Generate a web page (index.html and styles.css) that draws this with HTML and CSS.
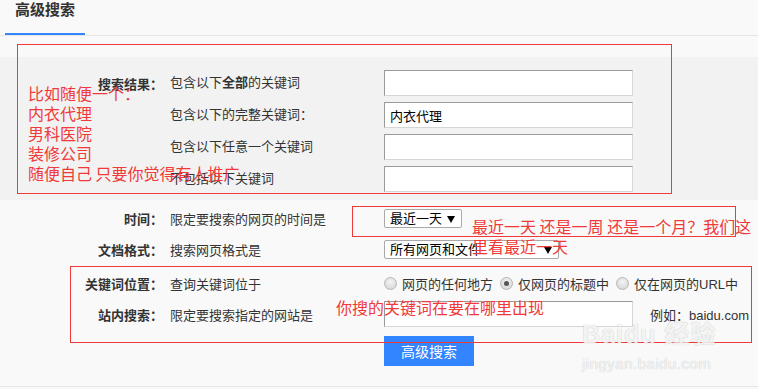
FILE: index.html
```html
<!DOCTYPE html>
<html lang="zh-CN">
<head>
<meta charset="utf-8">
<link rel="stylesheet" href="styles.css">
</head>
<body>
<div class="page">
  <div class="tabs">
    <div class="tab">高级搜索</div>
  </div>

  <div class="group">
    <div class="row">
      <div class="label">搜索结果：</div>
      <div class="desc">包含以下<b>全部</b>的关键词</div>
      <input class="field" type="text">
    </div>
    <div class="row">
      <div class="label"></div>
      <div class="desc">包含以下的完整关键词：</div>
      <input class="field" type="text" value="内衣代理">
    </div>
    <div class="row">
      <div class="label"></div>
      <div class="desc">包含以下任意一个关键词</div>
      <input class="field" type="text">
    </div>
    <div class="row">
      <div class="label"></div>
      <div class="desc">不包括以下关键词</div>
      <input class="field" type="text">
    </div>
  </div>

  <div class="plain">
    <div class="row row-time">
      <div class="label">时间：</div>
      <div class="desc">限定要搜索的网页的时间是</div>
      <span class="sel sel-time">最近一天</span>
    </div>
    <div class="row row-format">
      <div class="label">文档格式：</div>
      <div class="desc">搜索网页格式是</div>
      <span class="sel sel-format">所有网页和文件</span>
    </div>
    <div class="row row-pos">
      <div class="label">关键词位置：</div>
      <div class="desc">查询关键词位于</div>
      <div class="radios">
        <span class="radio"><i class="dot"></i>网页的任何地方</span>
        <span class="radio"><i class="dot on"></i>仅网页的标题中</span>
        <span class="radio"><i class="dot"></i>仅在网页的URL中</span>
      </div>
    </div>
    <div class="row row-site">
      <div class="label">站内搜索：</div>
      <div class="desc">限定要搜索指定的网站是</div>
      <input class="field" type="text">
      <span class="example">例如：baidu.com</span>
    </div>
    <div class="row row-btn">
      <div class="label"></div>
      <div class="desc"></div>
      <button class="btn">高级搜索</button>
    </div>
  </div>
  <div class="footline"></div>

  <div class="box box1"></div>
  <div class="box box2"></div>
  <div class="box box3"></div>

  <div class="note note1">比如随便一个：<br>内衣代理<br>男科医院<br>装修公司<br>随便自己 只要你觉得有人推广</div>
  <div class="note note2">最近一天 还是一周 还是一个月？我们这<br>里看最近一天</div>
  <div class="note note3">你搜的关键词在要在哪里出现</div>

  <div class="wm">
    <div class="wm-logo">Baidu 经验</div>
    <div class="wm-url">jingyan.baidu.com</div>
  </div>
</div>
</body>
</html>
```

FILE: styles.css
```css
* { box-sizing: border-box; }
html, body { margin: 0; padding: 0; }
body {
  background: #f9f9f9;
  font-family: "Liberation Sans", "Noto Sans CJK SC", sans-serif;
  font-size: 13px;
  color: #333;
  width: 758px;
  height: 389px;
  overflow: hidden;
}
.page { position: relative; width: 758px; height: 389px; }

.tabs {
  height: 36px;
  border-bottom: 1px solid #e6e6e6;
  padding-left: 5px;
}
.tab {
  width: 80px;
  height: 35px;
  border-bottom: 2px solid #3385ff;
  padding-left: 10px;
  font-size: 15px;
  font-weight: bold;
  line-height: 20px;
  color: #333;
}

.group {
  margin-top: 21px;
  background: #f2f2f2;
  padding: 13px 0 8px;
  height: 143px;
}
.row {
  display: flex;
  align-items: center;
  height: 26px;
  margin-bottom: 6px;
}
.group .desc { margin-top: -3px; }
.label {
  width: 163px;
  text-align: right;
  font-weight: bold;
  flex: none;
}
.desc {
  width: 221px;
  padding-left: 7px;
  flex: none;
}
.desc b { font-weight: bold; }
.field {
  width: 249px;
  height: 26px;
  background: #fff;
  border: 1px solid #d6d6d6;
  border-top-color: #9a9a9a;
  border-left-color: #9a9a9a;
  font-family: "Liberation Sans", "Noto Sans CJK SC", sans-serif;
  font-size: 13px;
  color: #000;
  padding: 0 5px;
  margin: 0;
  outline: none;
}

.plain { padding-top: 8px; }
.plain .row { margin-bottom: 0; }
.row-time { height: 20px; margin-top: 0; }
.row-format { height: 20px; margin-top: 11px; }
.row-pos { height: 20px; margin-top: 14px; }
.row-site { height: 26px; margin-top: 8px; }
.row-btn { height: 30px; margin-top: 9px; }

.sel {
  position: relative;
  display: inline-block;
  height: 19px;
  line-height: 17px;
  background: #fff;
  border: 1px solid #a9a9a9;
  border-radius: 2px;
  padding-left: 5px;
  color: #000;
  font-size: 13px;
}
.sel::after {
  content: "";
  position: absolute;
  right: 6px;
  top: 6px;
  width: 0;
  height: 0;
  border-left: 4px solid transparent;
  border-right: 4px solid transparent;
  border-top: 7px solid #000;
}
.sel-time { width: 78px; }
.sel-format { width: 175px; }

.radios { display: flex; align-items: center; }
.radio {
  display: inline-flex;
  align-items: center;
  margin-right: 7px;
  white-space: nowrap;
}
.dot {
  display: inline-block;
  width: 13px;
  height: 13px;
  border-radius: 50%;
  border: 1px solid #b5b5b5;
  background: radial-gradient(circle at 50% 35%, #f4f4f4 0%, #dcdcdc 70%, #cfcfcf 100%);
  margin: 0 5px 0 0;
  position: relative;
}
.dot.on::after {
  content: "";
  position: absolute;
  left: 3px; top: 3px;
  width: 5px; height: 5px;
  border-radius: 50%;
  background: #555;
}
.example { margin-left: 17px; white-space: nowrap; }

.btn {
  width: 90px;
  height: 30px;
  border: 0;
  background: #3385ff;
  color: #fff;
  font-family: "Noto Sans CJK SC", sans-serif;
  font-size: 14px;
  padding: 0;
  margin: 0;
}

.footline {
  position: absolute;
  left: 0; right: 0; top: 386px;
  border-top: 1px solid #e6e6e6;
}

.box { position: absolute; border: 1px solid #f03a3a; }
.box1 { left: 17px; top: 44px; width: 655px; height: 150px; }
.box2 { left: 352px; top: 206px; width: 384px; height: 31px; }
.box3 { left: 70px; top: 266px; width: 682px; height: 77px; }

.note {
  position: absolute;
  color: #f03a3a;
  font-family: "Noto Sans CJK SC", sans-serif;
  font-size: 16px;
  line-height: 20px;
  white-space: nowrap;
}
.note1 { left: 28px; top: 83px; }
.note2 { left: 472px; top: 216px; }
.note3 { left: 336px; top: 297px; }

.wm {
  position: absolute;
  left: 582px;
  top: 320px;
  color: rgba(255, 255, 255, 0.85);
  text-shadow: 0 0 1px rgba(0, 0, 0, 0.18), 0 0 1px rgba(0, 0, 0, 0.12);
  font-family: "Liberation Sans", "Noto Sans CJK SC", sans-serif;
}
.wm-logo { font-size: 25px; line-height: 28px; font-weight: bold; letter-spacing: 1px; }
.wm-url { font-size: 15px; line-height: 18px; margin-top: 7px; letter-spacing: 0.5px; }
```
